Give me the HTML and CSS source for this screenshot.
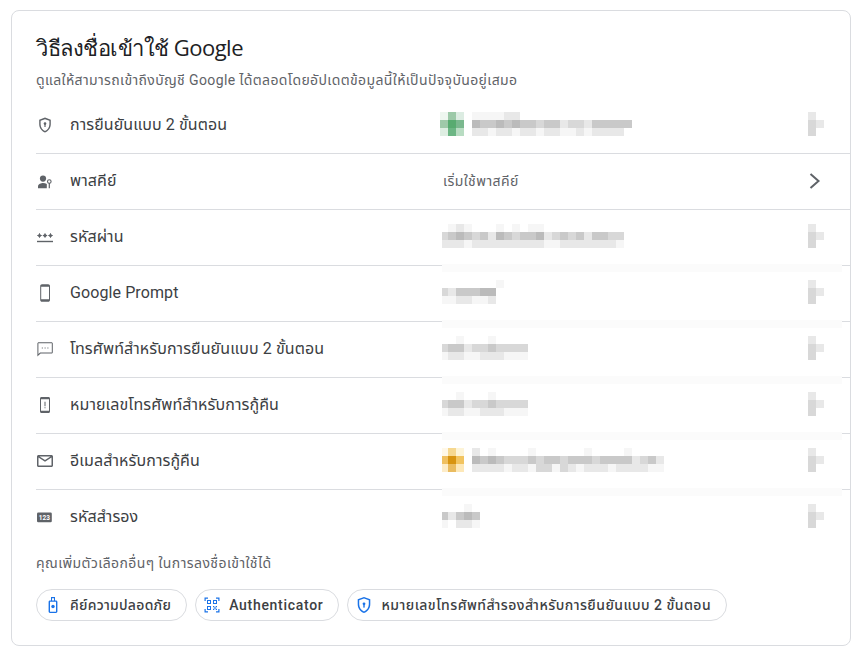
FILE: index.html
```html
<!DOCTYPE html>
<html lang="th">
<head>
<meta charset="utf-8">
<title>วิธีลงชื่อเข้าใช้ Google</title>
<link rel="stylesheet" href="styles.css">
</head>
<body>
<main class="card">
  <header class="head">
    <h1 class="title">วิธีลงชื่อเข้าใช้ Google</h1>
    <p class="sub">ดูแลให้สามารถเข้าถึงบัญชี Google ได้ตลอดโดยอัปเดตข้อมูลนี้ให้เป็นปัจจุบันอยู่เสมอ</p>
  </header>
  <section class="rows">
    <div class="row">
      <svg class="ico" viewBox="0 0 18 18"><path d="M9 1.600 3.200 3.800v4.500c0 3.700 2.500 7.200 5.800 8.100 3.300-.9 5.800-4.400 5.800-8.100V3.800zm4.400 6.700c0 3-1.900 5.800-4.400 6.700-2.500-.9-4.400-3.700-4.400-6.700V4.800L9 3.200l4.400 1.600z"/><circle cx="9" cy="7.600" r="1.300"/><rect x="8.400" y="8" width="1.200" height="3"/></svg>
      <span class="label">การยืนยันแบบ 2 ขั้นตอน</span>
      <div class="val">
        <div class="mosaic wide" data-cells="ABC|DEF|GHI"></div>
        <div class="mosaic gap" data-cells="ggggeeffffffffffffff|bccbcbccdccedde ccccc|eegeegeegeeggegeeeef"></div>
        <div class="mosaic end" data-cells="ef|de|df"></div>
      </div>
    </div>
    <div class="row">
      <svg class="ico" viewBox="0 0 18 18"><circle cx="7" cy="6.600" r="3.100"/><path d="M2 16.200v-2c0-2 3.300-3.200 5-3.200 1.400 0 2.800.4 3.800 1v4.200z"/><circle cx="13.300" cy="9.500" r="1.800" fill="none" stroke="#5f6368" stroke-width="1.100"/><path d="M12.700 11h1.200v5.200h-1.200z"/></svg>
      <span class="label">พาสคีย์</span>
      <div class="val">
        <span class="hint">เริ่มใช้พาสคีย์</span>
        <svg class="chev" viewBox="0 0 14 18"><path d="M2.500 2 10.500 9 2.500 16" fill="none" stroke="#5f6368" stroke-width="2"/></svg>
      </div>
    </div>
    <div class="row">
      <svg class="ico" viewBox="0 0 18 18"><rect x="1" y="12.800" width="16" height="1.400"/><circle cx="3.500" cy="7.500" r="1.600"/><circle cx="9" cy="7.500" r="1.600"/><circle cx="14.500" cy="7.500" r="1.600"/><path d="M3 5.300h1v4.400H3zM8.500 5.300h1v4.400h-1zM14 5.300h1v4.400h-1zM1.300 7h4.400v1H1.300zM6.800 7h4.400v1H6.800zM12.300 7h4.400v1h-4.400z"/></svg>
      <span class="label">รหัสผ่าน</span>
      <div class="val">
        <div class="mosaic clip" data-cells="fgegfffgfgfggfffffffff|dcbcdcebcdccbedcdceccdd|eeegeeeeeeeeeggeeeeeeeg"></div>
        <div class="mosaic end" data-cells="ef|de|df"></div>
      </div>
    </div>
    <div class="row veil">
      <svg class="ico" viewBox="0 0 18 18"><path d="M6 .2h6.200c1 0 1.800.8 1.800 1.800v14c0 1-.8 1.800-1.800 1.800H6c-1 0-1.800-.8-1.800-1.800V2C4.200 1 5 .2 6 .2zM5.200 2.800v12.400h7.800V2.800z"/></svg>
      <span class="label">Google Prompt</span>
      <div class="val">
        <div class="mosaic clip" data-cells="fffffffg|decccbbf|ggeeggef"></div>
        <div class="mosaic end" data-cells="ef|de|df"></div>
      </div>
    </div>
    <div class="row veil">
      <svg class="ico" viewBox="0 0 18 18"><path d="M2.800 2.200h12.600c.8 0 1.400.6 1.400 1.400v8.600c0 .8-.6 1.400-1.400 1.400H4.600l-3.200 2.800V3.600c0-.8.6-1.400 1.400-1.400zm-.4 1v10.900l1.700-1.500h11.700V3.200z"/><path d="M5.800 7.400h1v1h-1zM8.600 7.400h1v1h-1zM11.400 7.400h1v1h-1z"/></svg>
      <span class="label">โทรศัพท์สำหรับการยืนยันแบบ 2 ขั้นตอน</span>
      <div class="val">
        <div class="mosaic clip" data-cells="ffgfffgffff|dcceddcdddd|geeggeeeggg"></div>
        <div class="mosaic end" data-cells="ef|de|df"></div>
      </div>
    </div>
    <div class="row veil">
      <svg class="ico" viewBox="0 0 18 18"><path d="M5.500 1h7c.9 0 1.500.6 1.500 1.500v13c0 .9-.6 1.500-1.500 1.500h-7C4.600 17 4 16.400 4 15.500v-13C4 1.600 4.600 1 5.500 1zM5 3.300v11.400h8V3.300z"/><path d="M8.500 5.800h1v4.400h-1zM8.500 11.200h1v1.100h-1z"/></svg>
      <span class="label">หมายเลขโทรศัพท์สำหรับการกู้คืน</span>
      <div class="val">
        <div class="mosaic clip" data-cells="ffgfffgffff|dcceddcdddd|geeggeeeggg"></div>
        <div class="mosaic end" data-cells="ef|de|df"></div>
      </div>
    </div>
    <div class="row veil">
      <svg class="ico" viewBox="0 0 18 18"><path d="M2.600 3h12.800c.9 0 1.600.7 1.600 1.500v9c0 .8-.7 1.500-1.600 1.500H2.600C1.700 15 1 14.300 1 13.500v-9C1 3.700 1.700 3 2.600 3zm12.900 2.500L9 9.700 2.500 5.500v8h13zM3.500 4.500 9 8l5.500-3.500z"/></svg>
      <span class="label">อีเมลสำหรับการกู้คืน</span>
      <div class="val">
        <div class="mosaic clip" data-cells="JKL|MNO|PQR"></div>
        <div class="mosaic gap" data-cells="efgffffgffffffgffffgffff|bcbcdddcdccdcccdccccedce|eeeegeegddgdegeeegeeeegg"></div>
        <div class="mosaic end" data-cells="ef|de|df"></div>
      </div>
    </div>
    <div class="row veil last">
      <svg class="ico" viewBox="0 0 18 18"><rect x="1" y="4.600" width="14.800" height="9.600" rx="1.200"/><text class="ico-num" x="8.400" y="11.700" text-anchor="middle">123</text></svg>
      <span class="label">รหัสสำรอง</span>
      <div class="val">
        <div class="mosaic clip" data-cells="fffgf|cecbc|gfeeg"></div>
        <div class="mosaic end" data-cells="ef|de|df"></div>
      </div>
    </div>
  </section>
  <p class="more">คุณเพิ่มตัวเลือกอื่นๆ ในการลงชื่อเข้าใช้ได้</p>
  <nav class="chips">
    <a class="chip chip-key">
      <svg class="chip-ico" viewBox="0 0 18 18"><path d="M7 1h4v3.500h1c.8 0 1.400.6 1.400 1.400v9.700c0 .8-.6 1.400-1.400 1.400H6c-.8 0-1.400-.6-1.400-1.400V5.900c0-.8.6-1.400 1.400-1.400h1zm1 1.200v2.300h2V2.200zM6 5.800v9.900h6V5.800z"/><circle cx="9" cy="10.500" r="1.700"/></svg>
      คีย์ความปลอดภัย
    </a>
    <a class="chip chip-latin">
      <svg class="chip-ico" viewBox="0 0 18 18"><path d="M1.500 1.500h3.500v1.200H2.700V5H1.500zM13 1.500h3.500V5h-1.200V2.700H13zM1.500 13h1.200v2.300H5v1.200H1.500zM15.300 13h1.200v3.500H13v-1.200h2.300z"/><path d="M4 4h4v4H4zm1 1v2h2V5zM10 4h4v4h-4zm1 1v2h2V5zM4 10h4v4H4zm1 1v2h2v-2z"/><path d="M10 10h1.300v1.300H10zM12.700 10H14v1.300h-1.300zM11.300 11.300h1.400v1.400h-1.400zM10 12.700h1.300V14H10zM12.700 12.700H14V14h-1.300z"/></svg>
      Authenticator
    </a>
    <a class="chip">
      <svg class="chip-ico" viewBox="0 0 18 18"><path d="M9 1 2.700 3.300v4.900c0 4 2.700 7.700 6.300 8.800 3.600-1.100 6.300-4.800 6.300-8.800V3.300zm4.800 7.200c0 3.200-2 6.100-4.800 7.200-2.800-1.100-4.800-4-4.800-7.200V4.300L9 2.600l4.800 1.700z"/><circle cx="9" cy="7.800" r="1.400"/><rect x="8.300" y="8.400" width="1.400" height="3.200"/></svg>
      หมายเลขโทรศัพท์สำรองสำหรับการยืนยันแบบ 2 ขั้นตอน
    </a>
  </nav>
</main>
<script src="mosaic.js"></script>
</body>
</html>
```
FILE: styles.css
```css
* { box-sizing: border-box; }
html, body { margin: 0; background: #fff; }
body {
  padding: 10px 10px 0 11px;
  font-family: Roboto, "Noto Sans", "Noto Sans Thai", sans-serif;
}
.card {
  width: 840px;
  height: 636px;
  border: 1px solid #dadce0;
  border-radius: 8px;
  padding-left: 24px;
}
.head { padding-top: 22px; }
.title {
  margin: 0;
  font-size: 22px;
  line-height: 28px;
  font-weight: 400;
  letter-spacing: -0.5px;
  color: #202124;
  font-family: "Open Sans", Roboto, sans-serif;
}
.sub {
  margin: 9px 0 0;
  font-size: 14px;
  line-height: 20px;
  letter-spacing: 0.375px;
  color: #5f6368;
}
.rows { margin-top: 8px; }
.row {
  position: relative;
  display: grid;
  grid-template-columns: 34px 372px 1fr;
  align-items: center;
  height: 56px;
  border-bottom: 1px solid #dadce0;
}
.row.last { border-bottom: 0; }
.veil::before {
  content: "";
  position: absolute;
  left: 406px;
  right: 8px;
  top: -2px;
  height: 8px;
  background: #fbfbfb;
}
.ico { width: 18px; height: 18px; margin-bottom: 2px; fill: #5f6368; }
.ico-num { font: 700 6.5px Roboto, sans-serif; fill: #fff; }
.label { font-size: 16px; line-height: 20px; margin-bottom: 2px; letter-spacing: 0.1px; color: #3c4043; }
.val {
  display: flex;
  align-self: start;
  padding: 14px 26px 0 0;
  height: 55px;
}
.hint {
  font-size: 14px;
  line-height: 24px;
  letter-spacing: 0.45px;
  margin: 1px 0 0 1px;
  color: #5f6368;
}
.chev { width: 14px; height: 18px; margin: 4px 0 0 auto; position: relative; left: -2px; }
.mosaic { display: flex; flex-direction: column; }
.mosaic.wide { margin-left: -2px; }
.mosaic.gap { margin-left: 8px; }
.mosaic.end { margin-left: auto; }
.mrow { display: flex; }
.mrow i { display: block; width: 8px; height: 8px; }
.clip .mrow i:first-child { width: 6px; }
.sb { background: #bbb; }
.sc { background: #c9c9c9; }
.sd { background: #d8d8d8; }
.se { background: #e8e8e8; }
.sg { background: #f6f6f6; }
.sf { background: #fff; }
.sA { background: #edf6ef; }
.sB { background: #9cc9a8; }
.sC { background: #dcece2; }
.sD { background: #9fc9a9; }
.sE { background: #58ab70; }
.sF { background: #7ab88e; }
.sG { background: #deeee2; }
.sH { background: #6cb684; }
.sI { background: #b8dcc2; }
.sJ { background: #fff8e8; }
.sK { background: #f6d890; }
.sL { background: #fdf4d8; }
.sM { background: #f0c060; }
.sN { background: #d89410; }
.sO { background: #f2c460; }
.sP { background: #fdecc8; }
.sQ { background: #eabc60; }
.sR { background: #fde8b8; }
.more {
  margin: 7px 0 0;
  font-size: 14px;
  line-height: 20px;
  letter-spacing: 0.42px;
  color: #5f6368;
}
.chips { display: flex; gap: 8px; margin-top: 16px; }
.chip {
  display: flex;
  align-items: center;
  height: 32px;
  padding: 0 15px 0 7px;
  border: 1px solid #dadce0;
  border-radius: 16px;
  font-size: 14px;
  font-weight: 500;
  letter-spacing: 0.46px;
  color: #3c4043;
  white-space: nowrap;
}
.chip-key { letter-spacing: 0.27px; }
.chip-latin { letter-spacing: 0.7px; }
.chip-ico { width: 18px; height: 18px; margin-right: 8px; fill: #1a73e8; }
```
FILE: mosaic.js
```js
document.querySelectorAll('.mosaic').forEach(function (box) {
  box.dataset.cells.split('|').forEach(function (line) {
    var row = document.createElement('div');
    row.className = 'mrow';
    line.replace(/ /g, '').split('').forEach(function (c) {
      var cell = document.createElement('i');
      cell.className = 's' + c;
      row.appendChild(cell);
    });
    box.appendChild(row);
  });
});
```
